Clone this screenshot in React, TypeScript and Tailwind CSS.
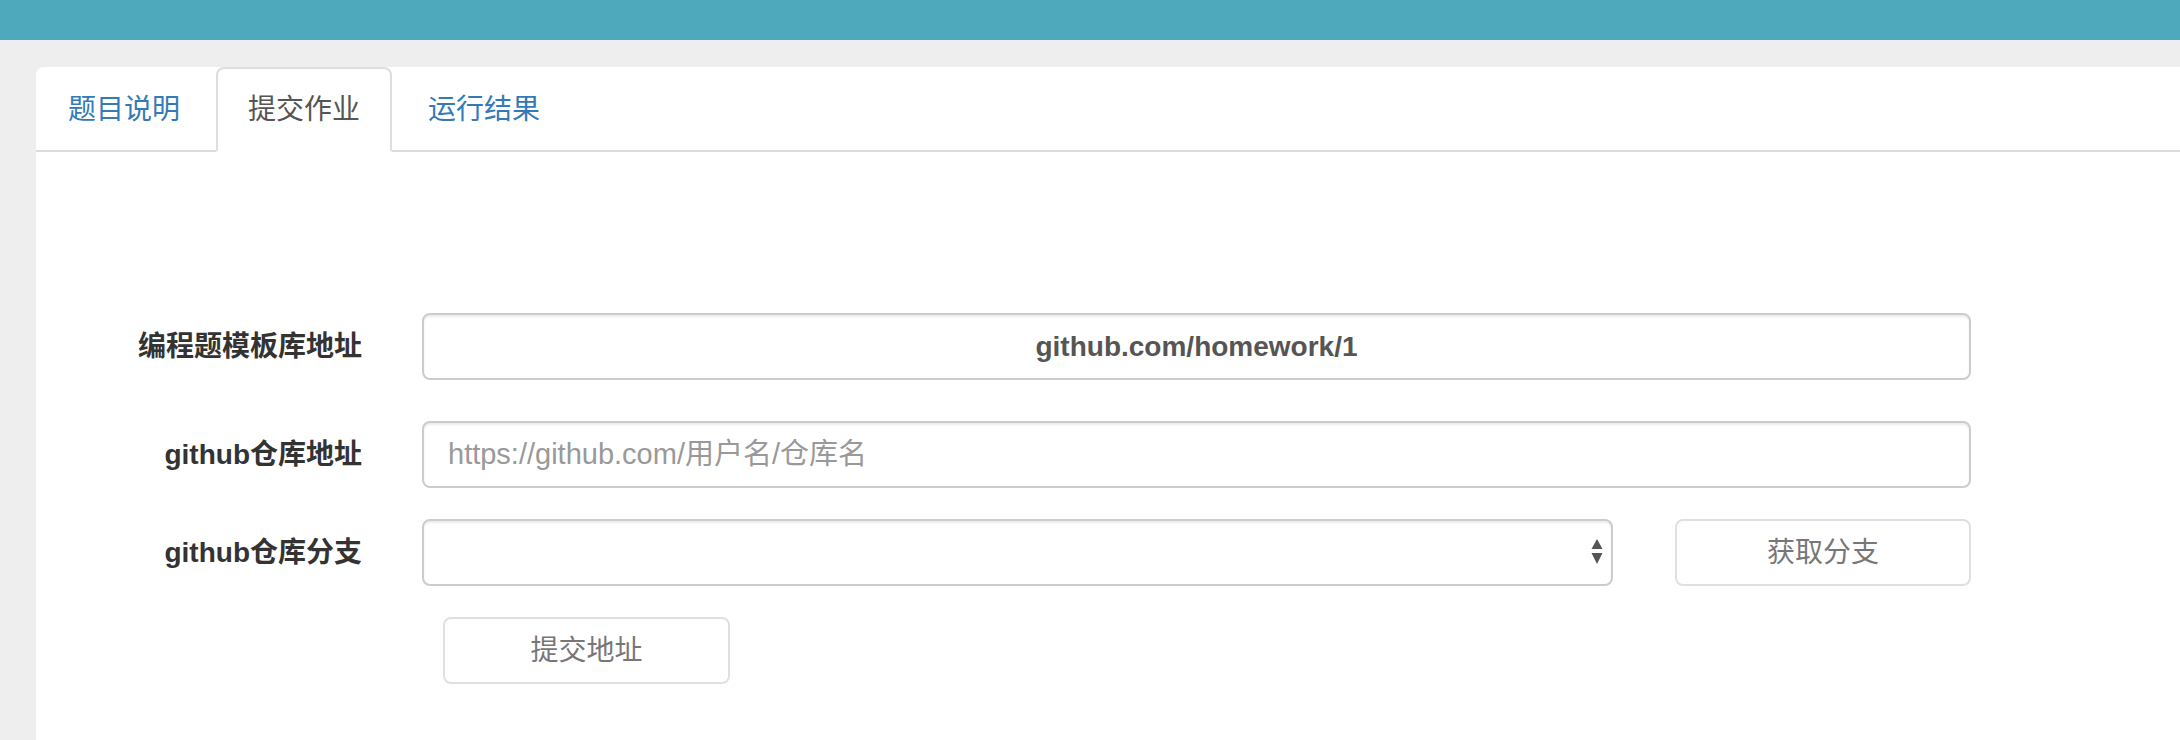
import { useState } from "react";

const font = "font-['Helvetica_Neue','Liberation_Sans','Noto_Sans_CJK_SC',sans-serif]";

export default function App() {
    const [tab, setTab] = useState("submit");
    const [repo, setRepo] = useState("");
    const [branch, setBranch] = useState("");

    const tabs = [
        { key: "desc", label: "题目说明" },
        { key: "submit", label: "提交作业" },
        { key: "result", label: "运行结果" },
    ];

    return (
        <div className={`min-h-[740px] flex flex-col bg-[#eeeeee] ${font}`}>
            <div className="h-10 bg-[#4fa9bd]" />
            <div className="flex-1 ml-9 mt-[27px] bg-white rounded-tl-lg flex flex-col">
                <ul className="flex border-b-2 border-[#dddddd] h-[85px]">
                    {tabs.map((t) => (
                        <li key={t.key} className="mr-1 -mb-[2px]">
                            <button
                                onClick={() => setTab(t.key)}
                                className={
                                    tab === t.key
                                        ? "h-[85px] px-[30px] text-[28px] leading-[40px] text-[#555555] bg-white border-2 border-[#dddddd] border-b-white rounded-t-lg"
                                        : "h-[85px] px-[30px] text-[28px] leading-[40px] text-[#337ab7] border-2 border-transparent rounded-t-lg"
                                }
                            >
                                {t.label}
                            </button>
                        </li>
                    ))}
                </ul>

                <form className="pt-[161px] flex flex-col" onSubmit={(e) => e.preventDefault()}>
                    <div className="flex items-center">
                        <label className="w-[326px] text-right text-[28px] font-bold text-[#333333]">编程题模板库地址</label>
                        <div className="ml-[60px] w-[1549px] h-[67px] flex items-center justify-center border-2 border-[#cccccc] rounded-lg shadow-[inset_0_2px_2px_rgba(0,0,0,0.075)] text-[28px] font-bold text-[#555555]">
                            github.com/homework/1
                        </div>
                    </div>

                    <div className="flex items-center mt-[41px]">
                        <label className="w-[326px] text-right text-[28px] font-bold text-[#333333]">github仓库地址</label>
                        <input
                            value={repo}
                            onChange={(e) => setRepo(e.target.value)}
                            placeholder="https://github.com/用户名/仓库名"
                            className="ml-[60px] w-[1549px] h-[67px] px-6 border-2 border-[#cccccc] rounded-lg shadow-[inset_0_2px_2px_rgba(0,0,0,0.075)] text-[29px] text-[#555555] placeholder:text-[#999999] outline-none"
                        />
                    </div>

                    <div className="flex items-center mt-[31px]">
                        <label className="w-[326px] text-right text-[28px] font-bold text-[#333333]">github仓库分支</label>
                        <div className="ml-[60px] w-[1191px] h-[67px] relative">
                            <select
                                value={branch}
                                onChange={(e) => setBranch(e.target.value)}
                                className="w-full h-full appearance-none px-6 border-2 border-[#cccccc] rounded-lg shadow-[inset_0_2px_2px_rgba(0,0,0,0.075)] bg-white text-[28px] text-[#555555] outline-none"
                            >
                                <option value=""></option>
                            </select>
                            <svg className="absolute right-[10px] top-[20px] pointer-events-none" width="12" height="26" viewBox="0 0 12 26">
                                <path d="M6 0 L11.5 10 L0.5 10 Z" fill="#555555" />
                                <path d="M0.5 14 L11.5 14 L6 25 Z" fill="#555555" />
                            </svg>
                        </div>
                        <button
                            type="button"
                            className="ml-[62px] w-[296px] h-[67px] border-2 border-[#e0e0e0] rounded-lg bg-white text-[28px] text-[#777777]"
                        >
                            获取分支
                        </button>
                    </div>

                    <div className="mt-[31px] ml-[407px]">
                        <button
                            type="submit"
                            className="w-[287px] h-[67px] border-2 border-[#e0e0e0] rounded-lg bg-white text-[28px] text-[#777777]"
                        >
                            提交地址
                        </button>
                    </div>
                </form>
            </div>
        </div>
    );
}
